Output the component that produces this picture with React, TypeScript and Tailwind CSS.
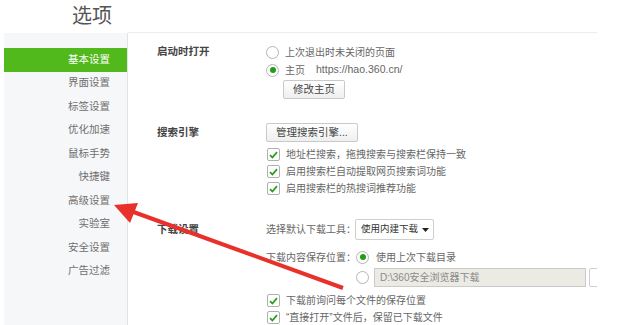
import React from "react";

const font = { fontFamily: '"Liberation Sans", "Noto Sans CJK SC", sans-serif' };

const menu = ["基本设置", "界面设置", "标签设置", "优化加速", "鼠标手势", "快捷键", "高级设置", "实验室", "安全设置", "广告过滤"];

function Radio({ checked }: { checked?: boolean }) {
  return (
    <span className="w-[13px] h-[13px] rounded-full border border-[#b5b5b5] bg-white flex items-center justify-center shrink-0">
      {checked && <span className="w-[6px] h-[6px] rounded-full bg-[#1f9e1a]" />}
    </span>
  );
}

function Check() {
  return (
    <span className="w-[13px] h-[13px] rounded-[2px] border border-[#b0b0b0] bg-white flex items-center justify-center shrink-0">
      <svg width="9" height="8" viewBox="0 0 9 8">
        <path d="M1 4.2 L3.4 6.5 L8 1.2" fill="none" stroke="#2a9e1c" strokeWidth="1.8" />
      </svg>
    </span>
  );
}

function Btn({ children }: { children: React.ReactNode }) {
  return (
    <span className="h-[19px] px-[9px] flex items-center border border-[#c9c9c9] rounded-[2px] bg-gradient-to-b from-white to-[#efefef] text-[10.5px] text-[#444] leading-none whitespace-nowrap">
      {children}
    </span>
  );
}

function CheckRow({ text }: { text: string }) {
  return (
    <div className="h-[17px] flex items-center gap-[6px] text-[10px] text-[#666] whitespace-nowrap">
      <Check />
      <span>{text}</span>
    </div>
  );
}

export default function App() {
  return (
    <div className="relative w-[620px] h-[325px] bg-white overflow-hidden" style={font}>
      <div className="h-[33px] pl-[72px] pt-[4px] text-[20px] text-[#555] leading-[25px]">选项</div>
      <div className="flex h-[292px]">
        <div className="ml-[4px] w-[124px] bg-[#f6f7f9] border-r border-[#e3e3e3] pt-[15px]">
          {menu.map((m, i) => (
            <div
              key={m}
              className={
                i === 0
                  ? "h-[23.5px] flex items-center justify-end pr-[17px] text-[10.5px] bg-[#52b91c] text-white"
                  : "h-[23.5px] flex items-center justify-end pr-[17px] text-[10.5px] text-[#6f6f6f]"
              }
            >
              {m}
            </div>
          ))}
        </div>
        <div className="w-[469px] border-t border-[#ececec] -mt-px overflow-hidden">
          {/* 启动时打开 */}
          <div className="flex mt-[10px]">
            <div className="w-[138px] shrink-0 pl-[29px] h-[18px] flex items-center text-[10.5px] font-bold text-[#444]">启动时打开</div>
            <div>
              <div className="h-[18px] flex items-center gap-[6px] text-[10px] text-[#666]">
                <Radio />
                <span>上次退出时未关闭的页面</span>
              </div>
              <div className="h-[18px] flex items-center gap-[6px] text-[10px] text-[#666]">
                <Radio checked />
                <span>主页</span>
                <span className="ml-[5px] text-[10.5px]">https://hao.360.cn/</span>
              </div>
              <div className="mt-[1px] ml-[17px] flex">
                <Btn>修改主页</Btn>
              </div>
            </div>
          </div>
          {/* 搜索引擎 */}
          <div className="flex mt-[24px]">
            <div className="w-[138px] shrink-0 pl-[29px] h-[19px] flex items-center text-[10.5px] font-bold text-[#444]">搜索引擎</div>
            <div>
              <div className="flex">
                <Btn>管理搜索引擎...</Btn>
              </div>
              <div className="mt-[4px] ml-[1px]">
                <CheckRow text="地址栏搜索，拖拽搜索与搜索栏保持一致" />
                <CheckRow text="启用搜索栏自动提取网页搜索词功能" />
                <CheckRow text="启用搜索栏的热搜词推荐功能" />
              </div>
            </div>
          </div>
          {/* 下载设置 */}
          <div className="flex mt-[22px]">
            <div className="w-[138px] shrink-0 pl-[29px] h-[21px] flex items-center text-[10.5px] font-bold text-[#444]">下载设置</div>
            <div className="flex-1">
              <div className="h-[21px] flex items-center text-[10px] text-[#666]">
                <span className="w-[89px] shrink-0 whitespace-nowrap">选择默认下载工具：</span>
                <span className="h-[21px] w-[79px] shrink-0 pl-[5px] pr-[4px] flex items-center justify-between border border-[#cfcfcf] rounded-[2px] bg-white text-[9.5px] text-[#333] whitespace-nowrap">
                  <span>使用内建下载</span>
                  <svg width="7" height="4" viewBox="0 0 7 4">
                    <path d="M0 0 H7 L3.5 4 Z" fill="#222" />
                  </svg>
                </span>
              </div>
              <div className="mt-[8px] h-[18px] flex items-center text-[10px] text-[#666]">
                <span className="w-[90px] shrink-0 whitespace-nowrap">下载内容保存位置：</span>
                <Radio checked />
                <span className="ml-[7px]">使用上次下载目录</span>
              </div>
              <div className="mt-[2px] h-[19px] flex items-center text-[10px]">
                <span className="w-[90px] shrink-0" />
                <Radio />
                <span className="ml-[5px] w-[212px] shrink-0 h-[19px] flex items-center pl-[5px] border border-[#cacaca] bg-[#ebebe4] text-[#8a8a8a]">
                  D:\360安全浏览器下载
                </span>
                <span className="ml-[3px] shrink-0 w-[40px] h-[19px] border border-[#cfcfcf] rounded-[2px] bg-white" />
              </div>
              <div className="mt-[5px] -ml-[137px] pl-[138px]">
                <CheckRow text="下载前询问每个文件的保存位置" />
                <CheckRow text="“直接打开”文件后，保留已下载文件" />
              </div>
            </div>
          </div>
        </div>
      </div>
      <svg className="absolute left-0 top-0 pointer-events-none" width="620" height="325" viewBox="0 0 620 325">
        <line x1="343" y1="288" x2="128" y2="210" stroke="#e8312b" strokeWidth="4" />
        <polygon points="114,205 138,203 130,223" fill="#e8312b" />
      </svg>
    </div>
  );
}
